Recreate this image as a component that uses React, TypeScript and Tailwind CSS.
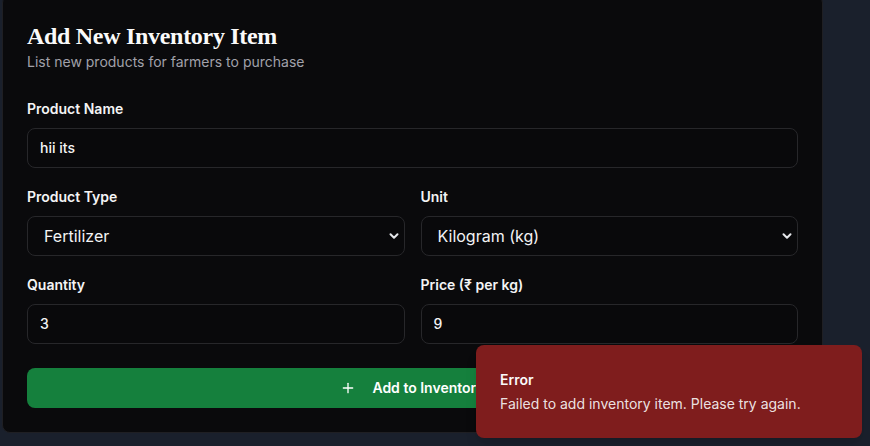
import React from "react";

const sans = { fontFamily: "Inter, 'Noto Sans', sans-serif" };

function Chevron() {
  return (
    <svg width="10" height="10" viewBox="0 0 10 10" className="text-gray-200">
      <path d="M1.5 3.2 L5 6.7 L8.5 3.2" fill="none" stroke="currentColor" strokeWidth="2" strokeLinecap="round" strokeLinejoin="round" />
    </svg>
  );
}

function Label({ children }: { children: React.ReactNode }) {
  return <div className="text-sm leading-5 font-semibold text-[#f4f4f5]">{children}</div>;
}

function Input({ value }: { value: string }) {
  return (
    <div className="mt-[9px] h-10 rounded-lg border border-[#27272a] bg-[#09090b] px-3 flex items-center text-sm font-medium text-[#f4f4f5]">
      {value}
    </div>
  );
}

function Select({ value }: { value: string }) {
  return (
    <div className="mt-[9px] h-10 rounded-lg border border-[#27272a] bg-[#09090b] pl-4 pr-[5px] flex items-center justify-between text-base text-[#f4f4f5]">
      <span>{value}</span>
      <Chevron />
    </div>
  );
}

export default function App() {
  return (
    <div className="relative w-[870px] h-[446px] overflow-hidden bg-[#1a202c]" style={sans}>
      <div className="pl-[2px] -mt-[5px]">
        <div className="w-[821px] rounded-lg border border-[#1f1f23] bg-[#0a0a0c] px-6 pt-6 pb-6">
          <h1
            className="text-[24px] leading-8 font-bold text-[#fafafa] tracking-[-0.3px]"
            style={{ fontFamily: "'Liberation Serif', 'DejaVu Serif', serif" }}
          >
            Add New Inventory Item
          </h1>
          <p className="text-sm leading-5 text-[#a1a1aa]">List new products for farmers to purchase</p>

          <div className="mt-[27px]">
            <Label>Product Name</Label>
            <Input value="hii its" />
          </div>

          <div className="mt-[19px] grid grid-cols-2 gap-x-4">
            <div>
              <Label>Product Type</Label>
              <Select value="Fertilizer" />
            </div>
            <div>
              <Label>Unit</Label>
              <Select value="Kilogram (kg)" />
            </div>
          </div>

          <div className="mt-[19px] grid grid-cols-2 gap-x-4">
            <div>
              <Label>Quantity</Label>
              <Input value="3" />
            </div>
            <div>
              <Label>Price (₹ per kg)</Label>
              <Input value="9" />
            </div>
          </div>

          <button className="mt-6 w-full h-10 rounded-lg bg-[#15803d] flex items-center justify-center gap-4 text-sm font-semibold text-white">
            <svg width="16" height="16" viewBox="0 0 24 24" fill="none" stroke="currentColor" strokeWidth="2" strokeLinecap="round">
              <path d="M5 12h14" />
              <path d="M12 5v14" />
            </svg>
            <span>Add to Inventory</span>
          </button>
        </div>
      </div>

      <div className="absolute right-2 bottom-2 w-[386px] rounded-lg bg-[#7f1d1d] px-6 pt-[25px] pb-6 shadow-lg">
        <div className="text-sm leading-5 font-semibold text-[#fafafa]">Error</div>
        <div className="mt-1 text-sm leading-5 text-[#fafafa]/90">Failed to add inventory item. Please try again.</div>
      </div>
    </div>
  );
}
